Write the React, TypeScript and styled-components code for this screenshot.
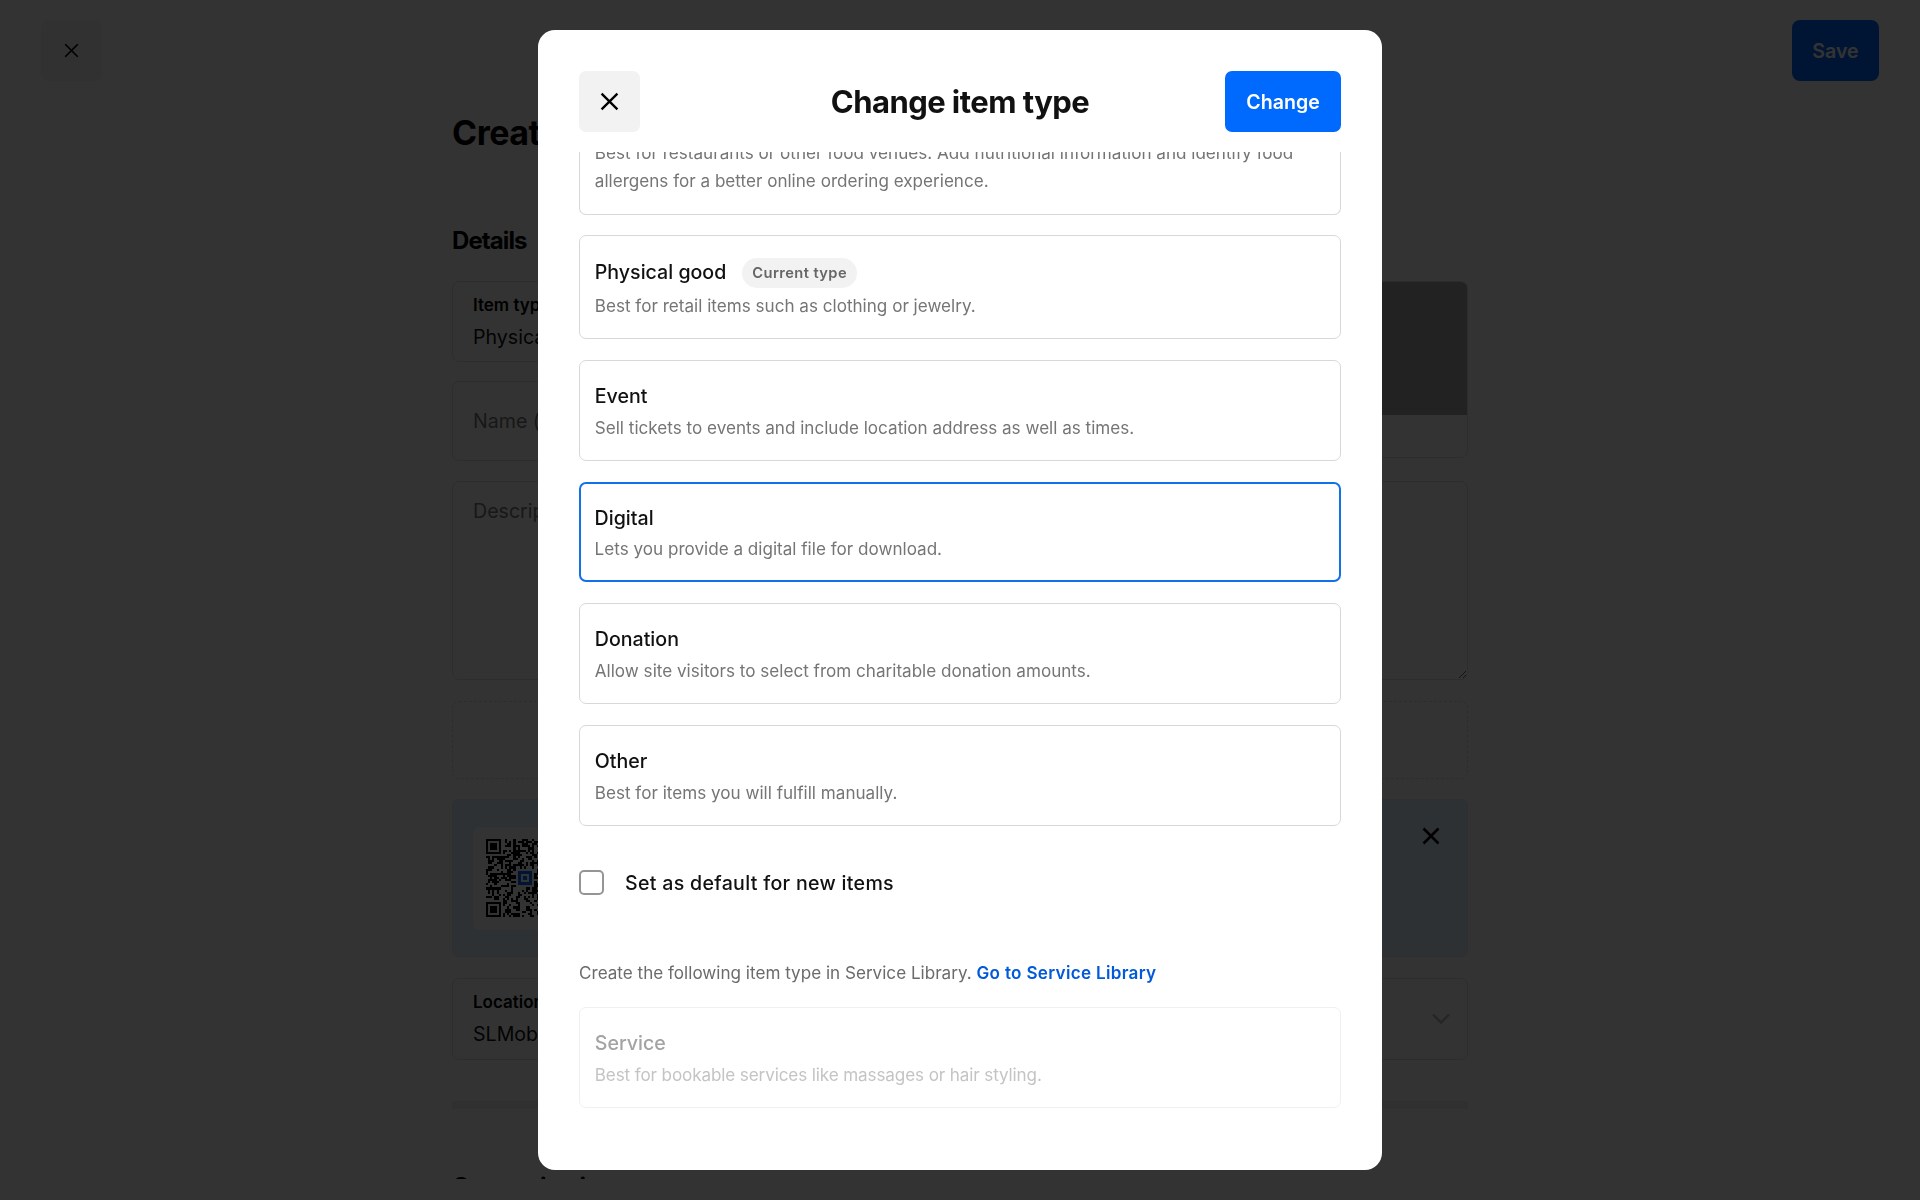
import React from "react";
import styled, { createGlobalStyle } from "styled-components";

const Global = createGlobalStyle`
  html, body { margin: 0; padding: 0; height: 100%; overflow: hidden; background: #fff; }
  body { font-family: Inter, "Liberation Sans", sans-serif; color: #111; }
  * { box-sizing: border-box; }
`;

/* ---------- page beneath the scrim ---------- */
const Page = styled.div`
  height: 1179px;
  overflow: hidden;
  background: #fff;
`;
const TopBar = styled.header`
  display: flex;
  justify-content: space-between;
  align-items: center;
  padding: 20px 41px 0;
`;
const PageClose = styled.button`
  width: 61px;
  height: 61px;
  border: 0;
  border-radius: 7px;
  background: #f2f2f2;
  display: flex;
  align-items: center;
  justify-content: center;
  color: #000;
  padding: 0;
`;
const SaveButton = styled.button`
  width: 87px;
  height: 61px;
  border: 0;
  border-radius: 8px;
  background: #006aff;
  color: #fff;
  font: 600 19.6px Inter, sans-serif;
`;
const Column = styled.main`
  width: 1016px;
  margin: 0 auto;
`;
const PageTitle = styled.h1`
  margin: 31px 0 0;
  font: 700 34px/41px Inter, sans-serif;
  letter-spacing: -0.5px;
  color: #000;
`;
const SectionTitle = styled.h2<{ $top: number }>`
  margin: ${(p) => p.$top}px 0 0;
  font: 700 24px/30px Inter, sans-serif;
  letter-spacing: -0.9px;
  color: #000;
`;
const Form = styled.div`
  margin-top: 25px;
  display: flex;
  flex-direction: column;
  gap: 20.4px;
`;
const TopGrid = styled.div`
  display: grid;
  grid-template-columns: 1fr 300px;
  gap: 20px;
  align-items: start;
`;
const FieldStack = styled.div`
  display: flex;
  flex-direction: column;
  gap: 19px;
`;
const Field = styled.div<{ $h: number }>`
  height: ${(p) => p.$h}px;
  border: 1px solid #e0e0e0;
  border-radius: 7px;
  padding: 0 17px 0 20px;
  display: flex;
  align-items: center;
  justify-content: space-between;
`;
const FieldText = styled.div`
  display: flex;
  flex-direction: column;
  gap: 6px;
`;
const FieldLabel = styled.span`
  font: 600 17px/24px Inter, sans-serif;
  color: #000;
`;
const FieldValue = styled.span`
  font: 400 19.6px/28px Inter, sans-serif;
  color: #111;
`;
const Placeholder = styled.span`
  font: 400 19.6px/28px Inter, sans-serif;
  color: #777;
`;
const ImagePanel = styled.div`
  height: 177px;
  border: 1px solid #e0e0e0;
  border-radius: 7px;
  overflow: hidden;
`;
const ImageFill = styled.div`
  height: 133px;
  background: #aaa;
`;
const DescriptionArea = styled.textarea`
  display: block;
  width: 100%;
  height: 199px;
  border: 1px solid #e0e0e0;
  border-radius: 7px;
  padding: 15px 20px;
  font: 400 19.6px/28px Inter, sans-serif;
  resize: vertical;
  outline: none;
  background: #fff;
  &::placeholder { color: #777; }
`;
const DashedBox = styled.div`
  height: 78px;
  border: 1px dashed #e0e0e0;
  border-radius: 7px;
`;
const Banner = styled.div`
  height: 158px;
  border: 1px solid #dbe3ea;
  border-radius: 7px;
  background: #e6f3fc;
  padding: 27px 27px 26px 20px;
  display: flex;
  justify-content: space-between;
  align-items: flex-start;
`;
const QrTile = styled.div`
  width: 103px;
  height: 103px;
  border-radius: 7px;
  background: #fff;
  padding: 12px 12px 12px 13px;
  display: flex;
`;
const BannerClose = styled.span`
  display: flex;
  color: #000;
`;
const Rule = styled.div`
  margin-top: 41px;
  height: 8px;
  background: #f0f0f0;
`;

/* ---------- scrim + dialog ---------- */
const Scrim = styled.div`
  position: fixed;
  inset: 0;
  background: rgba(0, 0, 0, 0.8);
  display: flex;
  align-items: center;
  justify-content: center;
`;
const Dialog = styled.section`
  width: 844px;
  height: 1140px;
  background: #fff;
  border-radius: 17px;
  padding: 41px 41px 0;
  display: flex;
  flex-direction: column;
  overflow: hidden;
`;
const DialogHeader = styled.div`
  display: grid;
  grid-template-columns: 116px 1fr 116px;
  align-items: center;
  height: 61px;
  flex: none;
`;
const CloseButton = styled.button`
  width: 61px;
  height: 61px;
  border: 0;
  padding: 0;
  border-radius: 7px;
  background: #f2f2f2;
  color: #000;
  display: flex;
  align-items: center;
  justify-content: center;
`;
const DialogTitle = styled.h2`
  margin: 0;
  text-align: center;
  font: 700 31px/40px Inter, sans-serif;
  letter-spacing: -0.55px;
  color: #111;
`;
const ChangeButton = styled.button`
  width: 116px;
  height: 61px;
  border: 0;
  border-radius: 7px;
  background: #006aff;
  color: #fff;
  font: 600 19.6px Inter, sans-serif;
`;
const DialogBody = styled.div`
  margin-top: 20px;
  flex: 1;
  min-height: 0;
  overflow: hidden;
`;
const CardList = styled.div`
  margin-top: -13px;
  display: flex;
  flex-direction: column;
  gap: 20.8px;
`;
const Card = styled.div<{ $selected?: boolean; $disabled?: boolean }>`
  border: ${(p) =>
    p.$selected
      ? "2.4px solid #1270e8"
      : p.$disabled
        ? "1.2px solid #f0f0f0"
        : "1.2px solid #d8d8d8"};
  border-radius: 7px;
  padding: ${(p) => (p.$selected ? "20px 13.6px 16.8px" : "21.2px 14.8px 18px")};
  background: #fff;
`;
const ClippedCard = styled(Card)`
  border-top-width: 0;
  border-top-left-radius: 0;
  border-top-right-radius: 0;
  padding-top: 0;
  padding-bottom: 18.6px;
`;
const CardTitleRow = styled.div`
  display: flex;
  align-items: flex-start;
  gap: 16px;
  min-height: 32px;
`;
const CardTitle = styled.div<{ $disabled?: boolean }>`
  font: 550 19.6px/29.4px Inter, sans-serif;
  color: ${(p) => (p.$disabled ? "#a3a3a3" : "#111")};
`;
const Badge = styled.span`
  margin-top: 0.4px;
  height: 30px;
  padding: 0 10px;
  border-radius: 15px;
  background: #f2f2f2;
  color: #666;
  font: 600 14.7px/30px Inter, sans-serif;
  letter-spacing: 0.4px;
`;
const CardDesc = styled.div<{ $disabled?: boolean }>`
  margin-top: 2.4px;
  font: 400 17.1px/28px Inter, sans-serif;
  letter-spacing: ${(p) => (p.$disabled ? "-0.12px" : "0")};
  color: ${(p) => (p.$disabled ? "#c4c4c4" : "#757575")};
`;
const FlushDesc = styled(CardDesc)`
  margin-top: 0;
`;
const CheckRow = styled.label`
  margin-top: 44px;
  display: flex;
  align-items: center;
  gap: 21px;
  height: 25px;
`;
const CheckBox = styled.span`
  width: 25px;
  height: 25px;
  border: 2.6px solid #959595;
  border-radius: 5px;
  background: #fff;
`;
const CheckLabel = styled.span`
  padding-top: 2px;
  font: 500 19.6px/28px Inter, sans-serif;
  letter-spacing: 0.3px;
  color: #111;
`;
const Note = styled.p`
  margin: 64px 0 20px;
  font: 400 17.1px/28px Inter, sans-serif;
  color: #6b6b6b;
`;
const NoteLink = styled.a`
  color: #005ad9;
  font-weight: 600;
  letter-spacing: 0.3px;
`;

/* ---------- drawings ---------- */
const Cross = ({ size, weight = 2 }: { size: number; weight?: number }) => (
  <svg width={size} height={size} viewBox="0 0 18 18" fill="none" stroke="currentColor" strokeWidth={weight}>
    <path d="M1.5 1.5 16.5 16.5M16.5 1.5 1.5 16.5" />
  </svg>
);
const Chevron = () => (
  <svg width="18" height="11" viewBox="0 0 18 11" fill="none" stroke="#bbb" strokeWidth="2.4">
    <path d="M1 1.5 9 9.5 17 1.5" />
  </svg>
);

const QR_SIZE = 37;
function qrCells(): Array<[number, number]> {
  let seed = 7321;
  const next = () => {
    seed = (seed * 1103515245 + 12345) & 0x7fffffff;
    return seed / 0x7fffffff;
  };
  const cells: Array<[number, number]> = [];
  for (let y = 0; y < QR_SIZE; y++) {
    for (let x = 0; x < QR_SIZE; x++) {
      const inFinder =
        (x < 8 && y < 8) || (x > QR_SIZE - 9 && y < 8) || (x < 8 && y > QR_SIZE - 9);
      const inLogo = x >= 14 && x <= 22 && y >= 14 && y <= 22;
      if (!inFinder && !inLogo && next() > 0.52) cells.push([x, y]);
    }
  }
  return cells;
}
const Finder = ({ x, y }: { x: number; y: number }) => (
  <g>
    <rect x={x + 0.5} y={y + 0.5} width="6" height="6" fill="none" stroke="#000" />
    <rect x={x + 2} y={y + 2} width="3" height="3" fill="#000" />
  </g>
);
const QrCode = () => (
  <svg width="78" height="78" viewBox={`0 0 ${QR_SIZE} ${QR_SIZE}`} shapeRendering="crispEdges">
    {qrCells().map(([x, y]) => (
      <rect key={`${x}-${y}`} x={x} y={y} width="1" height="1" fill="#000" />
    ))}
    <Finder x={0} y={0} />
    <Finder x={QR_SIZE - 7} y={0} />
    <Finder x={0} y={QR_SIZE - 7} />
    <rect x="15" y="15" width="7" height="7" rx="1" fill="#006aff" />
    <rect x="16.5" y="16.5" width="4" height="4" fill="#fff" />
    <rect x="17.5" y="17.5" width="2" height="2" fill="#006aff" />
  </svg>
);

const TYPES = [
  { title: "Event", desc: "Sell tickets to events and include location address as well as times." },
  { title: "Digital", desc: "Lets you provide a digital file for download.", selected: true },
  { title: "Donation", desc: "Allow site visitors to select from charitable donation amounts." },
  { title: "Other", desc: "Best for items you will fulfill manually." },
];

export default function App() {
  return (
    <>
      <Global />
      <Page>
        <TopBar>
          <PageClose aria-label="Close">
            <Cross size={15} />
          </PageClose>
          <SaveButton>Save</SaveButton>
        </TopBar>
        <Column>
          <PageTitle>Create item</PageTitle>
          <SectionTitle $top={73}>Details</SectionTitle>
          <Form>
            <TopGrid>
              <FieldStack>
                <Field $h={81}>
                  <FieldText>
                    <FieldLabel>Item type</FieldLabel>
                    <FieldValue>Physical good</FieldValue>
                  </FieldText>
                </Field>
                <Field $h={80}>
                  <Placeholder>Name (required)</Placeholder>
                </Field>
              </FieldStack>
              <ImagePanel>
                <ImageFill />
              </ImagePanel>
            </TopGrid>
            <DescriptionArea placeholder="Description" readOnly />
            <DashedBox />
            <Banner>
              <QrTile>
                <QrCode />
              </QrTile>
              <BannerClose>
                <Cross size={18} weight={2.6} />
              </BannerClose>
            </Banner>
            <Field $h={82}>
              <FieldText>
                <FieldLabel>Locations</FieldLabel>
                <FieldValue>SLMobile</FieldValue>
              </FieldText>
              <Chevron />
            </Field>
          </Form>
          <Rule />
          <SectionTitle $top={63}>Categorization</SectionTitle>
        </Column>
      </Page>
      <Scrim>
        <Dialog role="dialog" aria-label="Change item type">
          <DialogHeader>
            <CloseButton aria-label="Close">
              <Cross size={19} weight={2.2} />
            </CloseButton>
            <DialogTitle>Change item type</DialogTitle>
            <ChangeButton>Change</ChangeButton>
          </DialogHeader>
          <DialogBody>
            <CardList>
              <ClippedCard>
                <FlushDesc>
                  Best for restaurants or other food venues. Add nutritional information and identify food
                  allergens for a better online ordering experience.
                </FlushDesc>
              </ClippedCard>
              <Card>
                <CardTitleRow>
                  <CardTitle>Physical good</CardTitle>
                  <Badge>Current type</Badge>
                </CardTitleRow>
                <CardDesc>Best for retail items such as clothing or jewelry.</CardDesc>
              </Card>
              {TYPES.map((t) => (
                <Card key={t.title} $selected={t.selected}>
                  <CardTitle>{t.title}</CardTitle>
                  <CardDesc>{t.desc}</CardDesc>
                </Card>
              ))}
            </CardList>
            <CheckRow>
              <CheckBox />
              <CheckLabel>Set as default for new items</CheckLabel>
            </CheckRow>
            <Note>
              Create the following item type in Service Library. <NoteLink>Go to Service Library</NoteLink>
            </Note>
            <Card $disabled>
              <CardTitle $disabled>Service</CardTitle>
              <CardDesc $disabled>Best for bookable services like massages or hair styling.</CardDesc>
            </Card>
          </DialogBody>
        </Dialog>
      </Scrim>
    </>
  );
}
